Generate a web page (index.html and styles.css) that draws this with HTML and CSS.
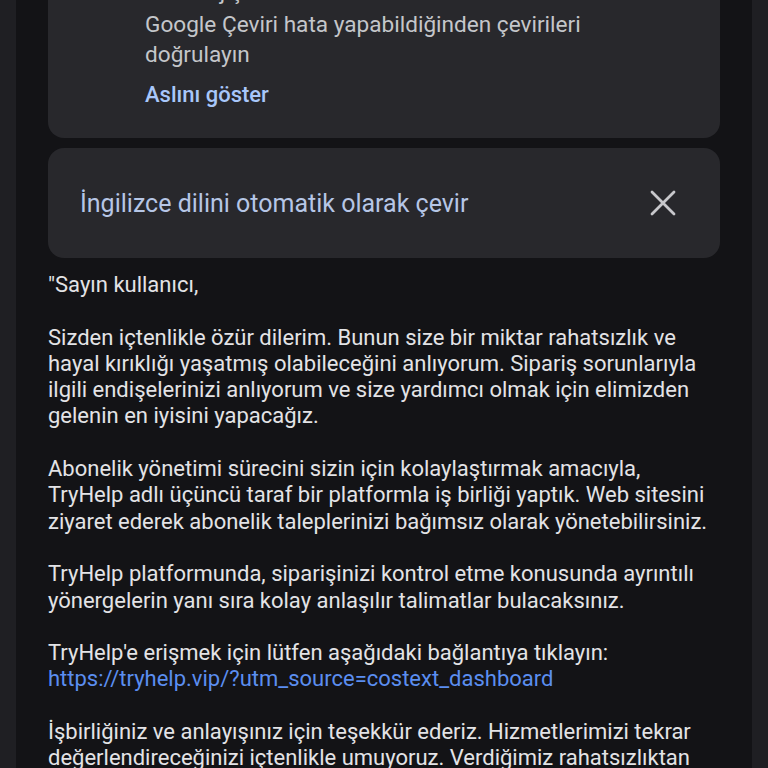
FILE: index.html
```html
<!DOCTYPE html>
<html lang="tr">
<head>
<meta charset="utf-8">
<link rel="stylesheet" href="styles.css">
</head>
<body>
<div class="page">
  <div class="card notice">
    <div class="notice-hidden">E-mesaj çevrildi</div>
    <div class="notice-line">Google Çeviri hata yapabildiğinden çevirileri<br>doğrulayın</div>
    <div class="show-original">Aslını göster</div>
  </div>
  <div class="card auto">
    <span class="auto-text">İngilizce dilini otomatik olarak çevir</span>
    <svg class="close" width="28" height="28" viewBox="0 0 28 28" aria-hidden="true">
      <path d="M3 3 L25 25 M25 3 L3 25" stroke="#c8c8cc" stroke-width="2.8" stroke-linecap="round" fill="none"/>
    </svg>
  </div>
  <div class="message">
    <p>"Sayın kullanıcı,</p>
    <p>Sizden içtenlikle özür dilerim. Bunun size bir miktar rahatsızlık ve<br>hayal kırıklığı yaşatmış olabileceğini anlıyorum. Sipariş sorunlarıyla<br>ilgili endişelerinizi anlıyorum ve size yardımcı olmak için elimizden<br>gelenin en iyisini yapacağız.</p>
    <p>Abonelik yönetimi sürecini sizin için kolaylaştırmak amacıyla,<br>TryHelp adlı üçüncü taraf bir platformla iş birliği yaptık. Web sitesini<br>ziyaret ederek abonelik taleplerinizi bağımsız olarak yönetebilirsiniz.</p>
    <p>TryHelp platformunda, siparişinizi kontrol etme konusunda ayrıntılı<br>yönergelerin yanı sıra kolay anlaşılır talimatlar bulacaksınız.</p>
    <p>TryHelp'e erişmek için lütfen aşağıdaki bağlantıya tıklayın:<br><a class="link" href="#">https://tryhelp.vip/?utm_source=costext_dashboard</a></p>
    <p>İşbirliğiniz ve anlayışınız için teşekkür ederiz. Hizmetlerimizi tekrar<br>değerlendireceğinizi içtenlikle umuyoruz. Verdiğimiz rahatsızlıktan<br>dolayı tekrar özür dileriz.</p>
  </div>
</div>
</body>
</html>
```
FILE: styles.css
```css
html, body {
  margin: 0;
  padding: 0;
  background: #1f1f23;
  height: 768px;
  overflow: hidden;
}
body {
  font-family: Roboto, "Noto Sans", sans-serif;
  font-size: 20px;
}
.page {
  margin: 0 16px;
  padding: 0 32px;
  background: #131316;
  height: 768px;
  overflow: hidden;
}
.card {
  background: #28282c;
  border-radius: 16px;
}
.notice {
  margin-top: -43px;
  padding: 20px 24px 28px 97px;
  color: #c4c6ca;
  font-size: 22.6px;
  line-height: 30px;
}
.notice-hidden {
  margin-bottom: 3px;
}
.show-original {
  margin-top: 10px;
  color: #a8c7fa;
  font-size: 22px;
  font-weight: 500;
}
.auto {
  margin-top: 10px;
  height: 110px;
  display: flex;
  align-items: center;
  justify-content: space-between;
  padding: 0 43px 0 32px;
  box-sizing: border-box;
}
.auto-text {
  color: #b6c6e6;
  font-size: 25px;
}
.close {
  display: block;
}
.message {
  margin-top: 14px;
  color: #e3e3e6;
  font-size: 22px;
  line-height: 26.3px;
  white-space: nowrap;
}
.message p {
  margin: 0 0 26.3px 0;
}
.link {
  color: #5b8ef0;
  text-decoration: none;
}
```
